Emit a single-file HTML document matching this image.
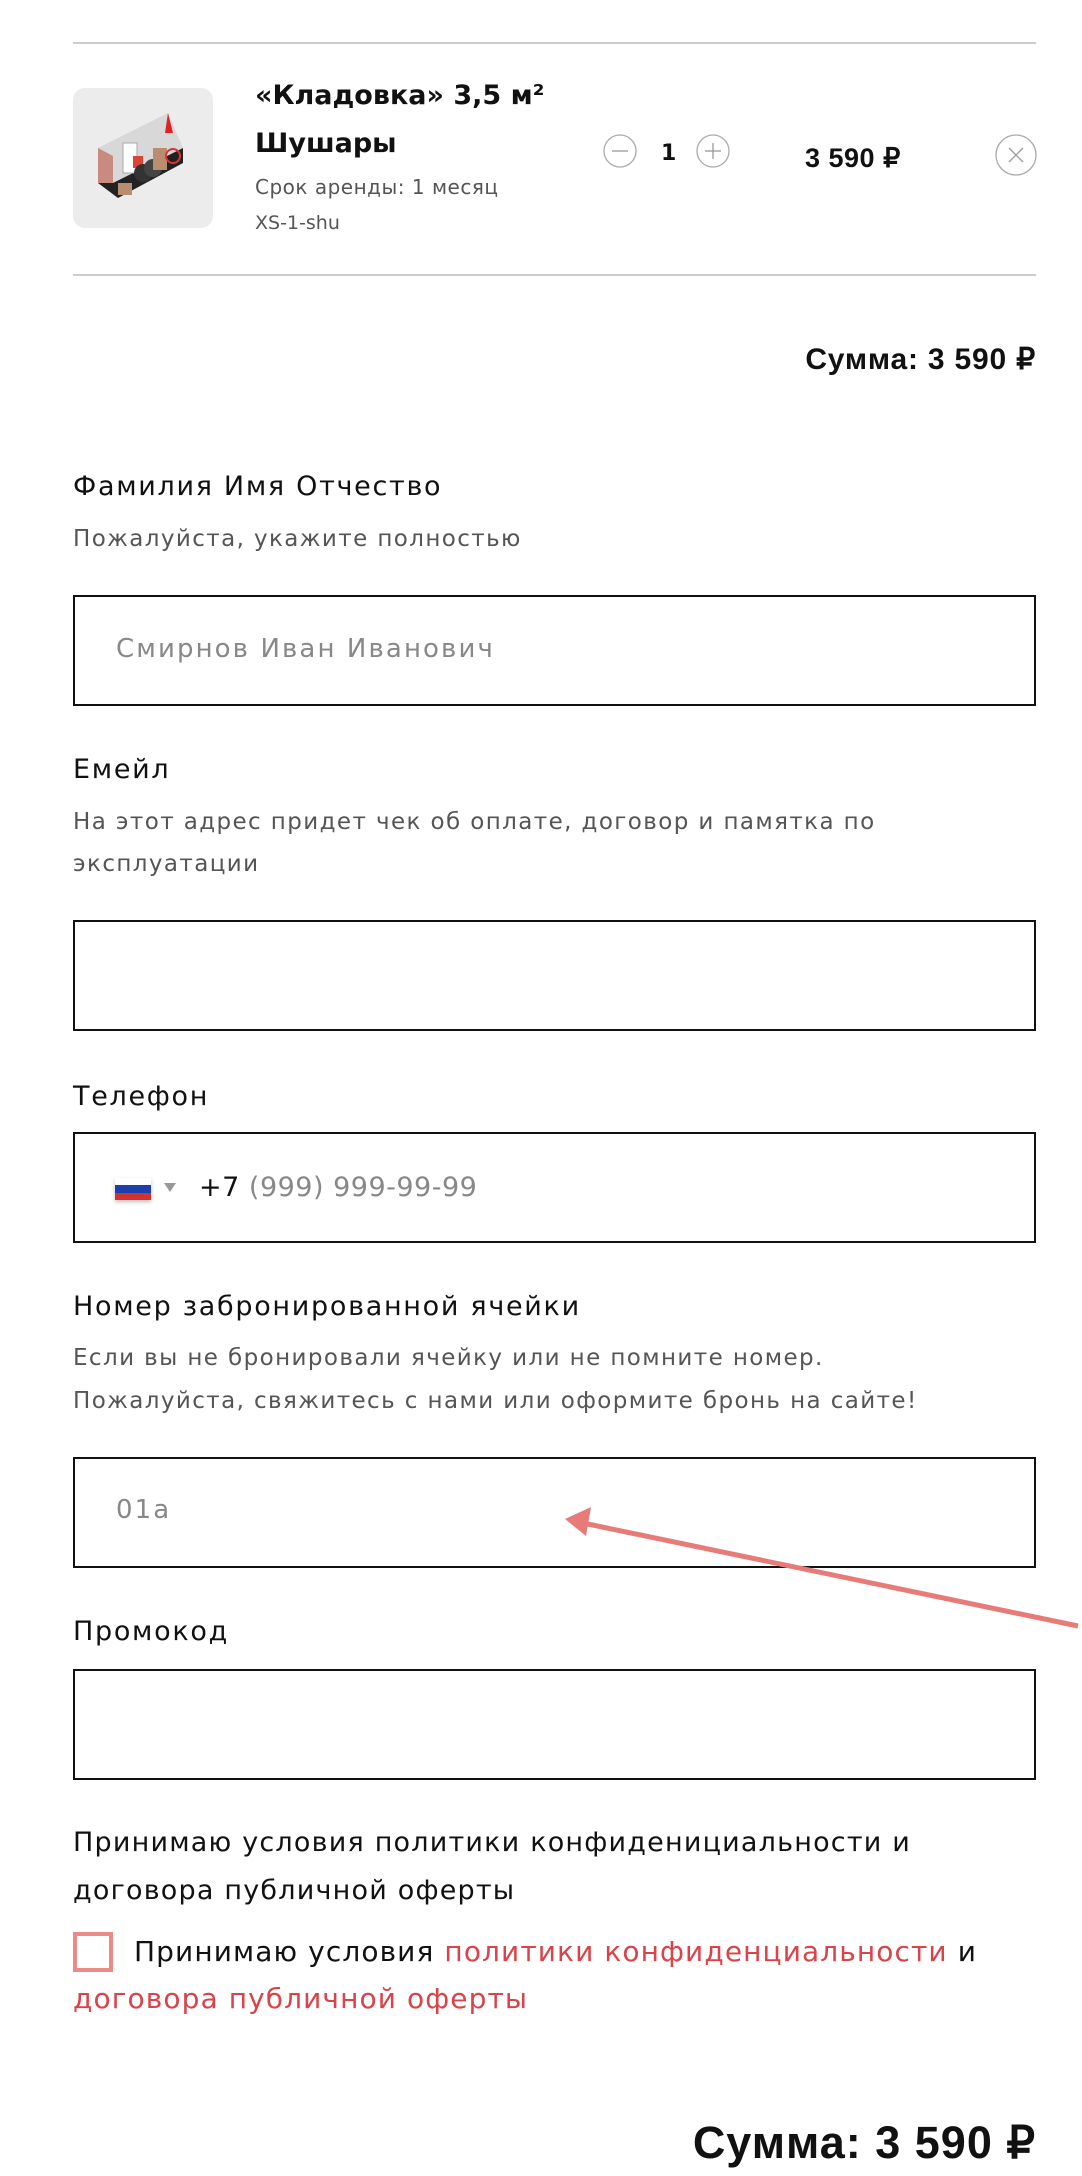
<!DOCTYPE html>
<html><head><meta charset="utf-8"><style>
*{margin:0;padding:0;box-sizing:border-box}
body{width:1082px;height:2176px;background:#fff;font-family:"DejaVu Sans","Liberation Sans",sans-serif;color:#111;position:relative;overflow:hidden}
.a{position:absolute;white-space:nowrap}
.hr{position:absolute;left:73px;width:963px;height:2px;background:#ccc}
.inp{position:absolute;left:73px;width:963px;height:111px;border:2px solid #111}
.lbl{font-size:27px;color:#111;letter-spacing:1.7px}
.desc{font-size:23px;color:#555;letter-spacing:1.4px}
.ph{font-size:26px;color:#888;letter-spacing:2.1px}
.ls{font-family:"Liberation Sans",sans-serif}
</style></head><body>
<div class="hr" style="top:42px"></div>
<div class="a" style="left:73px;top:88px;width:140px;height:140px;background:#ececec;border-radius:12px">
<svg width="140" height="140" viewBox="0 0 140 140">
<polygon points="25,60 95,25 110,60 40,95" fill="#d8d8d8"/>
<polygon points="25,95 40,95 110,60 110,75 45,110" fill="#222"/>
<polygon points="25,60 40,68 40,95 25,95" fill="#c98a80"/>
<rect x="50" y="55" width="14" height="30" fill="#fff" stroke="#aaa"/>
<rect x="60" y="68" width="10" height="12" fill="#d43"/>
<circle cx="70" cy="85" r="9" fill="#333"/><circle cx="80" cy="80" r="9" fill="#444"/>
<rect x="80" y="60" width="14" height="22" fill="#b98d70"/>
<rect x="45" y="95" width="14" height="12" fill="#b98d70"/>
<polygon points="95,25 100,45 92,45" fill="#d22"/>
<circle cx="100" cy="68" r="7" fill="none" stroke="#d33" stroke-width="2"/>
</svg></div>
<div class="a" style="left:255px;top:80px;font-size:27px;font-weight:bold">«Кладовка» 3,5 м²</div>
<div class="a" style="left:255px;top:128px;font-size:27px;font-weight:bold">Шушары</div>
<div class="a" style="left:255px;top:175px;font-size:20px;color:#555;letter-spacing:0.5px">Срок аренды: 1 месяц</div>
<div class="a" style="left:255px;top:212px;font-size:19px;color:#555">XS-1-shu</div>
<svg class="a" style="left:602px;top:133px" width="36" height="36"><circle cx="18" cy="18" r="16" fill="none" stroke="#aaa" stroke-width="1.3"/><line x1="10" y1="18" x2="26" y2="18" stroke="#999" stroke-width="1.3"/></svg>
<div class="a" style="left:661px;top:141px;font-size:22px;font-weight:bold">1</div>
<svg class="a" style="left:695px;top:133px" width="36" height="36"><circle cx="18" cy="18" r="16" fill="none" stroke="#aaa" stroke-width="1.3"/><line x1="10" y1="18" x2="26" y2="18" stroke="#999" stroke-width="1.3"/><line x1="18" y1="10" x2="18" y2="26" stroke="#999" stroke-width="1.3"/></svg>
<div class="a ls" style="left:805px;top:143px;font-size:27px;font-weight:bold;letter-spacing:0.5px">3 590 ₽</div>
<svg class="a" style="left:994px;top:133px" width="44" height="44"><circle cx="22" cy="22" r="20" fill="none" stroke="#aaa" stroke-width="1.3"/><line x1="15" y1="15" x2="29" y2="29" stroke="#999" stroke-width="1.3"/><line x1="29" y1="15" x2="15" y2="29" stroke="#999" stroke-width="1.3"/></svg>
<div class="hr" style="top:274px"></div>
<div class="a ls" style="right:46px;top:342px;font-size:30px;font-weight:bold;letter-spacing:0.8px">Сумма: 3 590 ₽</div>

<div class="a lbl" style="left:73px;top:471px">Фамилия Имя Отчество</div>
<div class="a desc" style="left:73px;top:526px">Пожалуйста, укажите полностью</div>
<div class="inp" style="top:595px"></div>
<div class="a ph" style="left:116px;top:634px">Смирнов Иван Иванович</div>

<div class="a lbl" style="left:73px;top:754px">Емейл</div>
<div class="a desc" style="left:73px;top:809px">На этот адрес придет чек об оплате, договор и памятка по</div>
<div class="a desc" style="left:73px;top:851px">эксплуатации</div>
<div class="inp" style="top:920px"></div>

<div class="a lbl" style="left:73px;top:1081px">Телефон</div>
<div class="inp" style="top:1132px"></div>
<div class="a" style="left:115px;top:1178px;width:36px;height:22px;box-shadow:0 2px 4px rgba(0,0,0,.25)">
<div style="height:7px;background:#fff"></div><div style="height:8px;background:#1c3fb0"></div><div style="height:7px;background:#d2322d"></div></div>
<div class="a" style="left:164px;top:1183px;width:0;height:0;border-left:6px solid transparent;border-right:6px solid transparent;border-top:9px solid #999"></div>
<div class="a" style="left:199px;top:1172px;font-size:27px;letter-spacing:0.5px"><span style="color:#111">+7</span> <span style="color:#888">(999) 999-99-99</span></div>

<div class="a lbl" style="left:73px;top:1291px">Номер забронированной ячейки</div>
<div class="a desc" style="left:73px;top:1345px">Если вы не бронировали ячейку или не помните номер.</div>
<div class="a desc" style="left:73px;top:1388px">Пожалуйста, свяжитесь с нами или оформите бронь на сайте!</div>
<div class="inp" style="top:1457px"></div>
<div class="a ph" style="left:116px;top:1495px">01a</div>
<svg class="a" style="left:0;top:0" width="1082" height="2176"><line x1="1078" y1="1626" x2="583" y2="1523" stroke="#e77b78" stroke-width="5"/><polygon points="565,1519 591,1507 586,1536" fill="#e77b78"/></svg>

<div class="a lbl" style="left:73px;top:1616px">Промокод</div>
<div class="inp" style="top:1669px"></div>

<div class="a lbl" style="left:73px;top:1827px;letter-spacing:1.2px">Принимаю условия политики конфиденициальности и</div>
<div class="a lbl" style="left:73px;top:1875px;letter-spacing:1.2px">договора публичной оферты</div>
<div class="a" style="left:73px;top:1932px;width:40px;height:40px;border:4px solid #ec8a88"></div>
<div class="a" style="left:134px;top:1935px;font-size:28px;letter-spacing:1.1px">Принимаю условия <span style="color:#d9434a">политики конфиденциальности</span> и</div>
<div class="a" style="left:73px;top:1982px;font-size:28px;color:#d9434a;letter-spacing:1.1px">договора публичной оферты</div>

<div class="a ls" style="right:46px;top:2116px;font-size:45px;font-weight:bold;letter-spacing:1px">Сумма: 3 590 ₽</div>
</body></html>
